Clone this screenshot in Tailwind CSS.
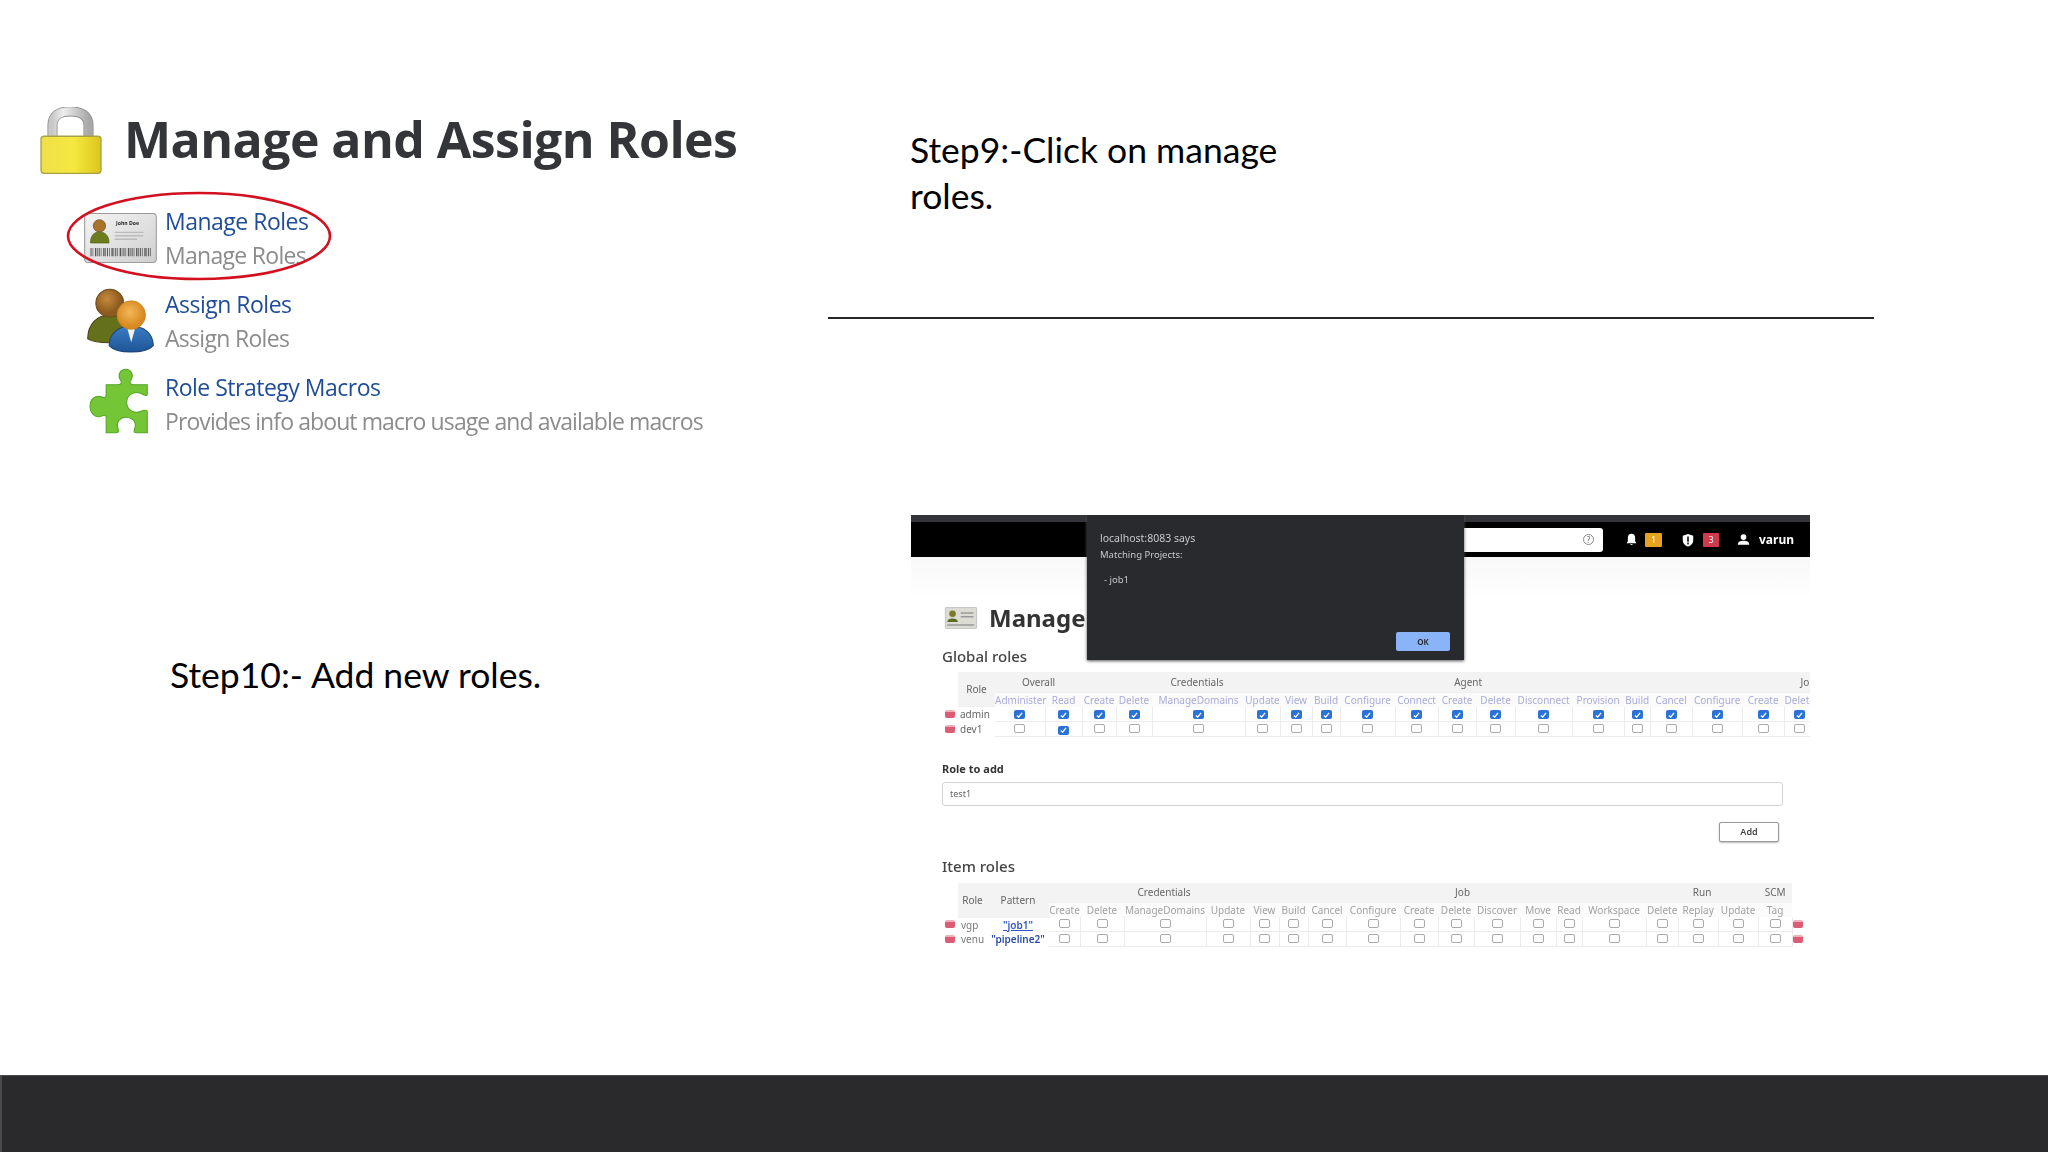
<!DOCTYPE html>
<html lang="en">
<head>
  <meta charset="UTF-8">
  <title>Manage and Assign Roles</title>
  <script src="https://cdn.jsdelivr.net/npm/@tailwindcss/browser@4"></script>
</head>
<body class="bg-white">
<div class="relative w-[2048px] h-[1152px] overflow-hidden flex flex-col bg-white font-['Open_Sans',sans-serif]">
  <div class="h-[1075px] flex">

    <!-- left column -->
    <div class="w-[828px] pt-[107px]">
      <div class="flex items-center pl-[39px] h-[68px]">
        <svg class="w-[64px] h-[69px]" viewBox="25 35 190 205">
          <defs>
            <linearGradient id="lk" x1="0" x2="1" y1="0" y2="0"><stop offset="0" stop-color="#efe04a"/><stop offset=".55" stop-color="#f5e840"/><stop offset="1" stop-color="#dcc51c"/></linearGradient>
            <linearGradient id="sh" x1="0" x2="1" y1="0" y2="0"><stop offset="0" stop-color="#c8c8c8"/><stop offset=".3" stop-color="#eeeeee"/><stop offset="1" stop-color="#a8a8a8"/></linearGradient>
          </defs>
          <path d="M65 125 V90 C65 60 85 48 118 48 C150 48 172 60 172 90 V125" fill="none" stroke="#8f8f8f" stroke-width="30"/>
          <path d="M65 125 V90 C65 60 85 48 118 48 C150 48 172 60 172 90 V125" fill="none" stroke="url(#sh)" stroke-width="25"/>
          <rect x="31" y="122" width="178" height="110" rx="9" fill="url(#lk)" stroke="#a99f45" stroke-width="4"/>
        </svg>
        <h1 class="ml-[21px] -mt-[5px] text-[50px] leading-[68px] font-bold tracking-[-0.55px] text-[#333538] whitespace-nowrap">Manage and Assign Roles</h1>
      </div>

      <div class="mt-[29px] pl-[84px] flex flex-col blur-[0.3px]">
        <div class="relative h-[83px] flex">
          <div class="w-[81px] pt-[8px]">
            <svg class="w-[73px] h-[52px]" viewBox="45 40 213 147">
              <defs><linearGradient id="cd" x1="0" x2="1" y1="0" y2="1"><stop offset="0" stop-color="#f4f4f4"/><stop offset="1" stop-color="#cfcfcf"/></linearGradient></defs>
              <rect x="47" y="42" width="209" height="143" rx="10" fill="url(#cd)" stroke="#9a9a9a" stroke-width="3"/>
              <circle cx="90" cy="78" r="18" fill="#a8742c" stroke="#6b4a1c" stroke-width="2"/>
              <path d="M64 128 C64 104 76 96 90 96 C104 96 118 104 118 128 Z" fill="#6d7d1e" stroke="#4f5a16" stroke-width="2"/>
              <text x="172" y="77" text-anchor="middle" font-size="15" font-weight="700" fill="#222">John Doe</text>
              <path d="M135 97 H218 M135 107 H218 M135 117 H200" stroke="#bbb" stroke-width="4"/>
              <path d="M64 155 H242" stroke="#555" stroke-width="24" stroke-dasharray="3 3 2 5 4 2 2 3"/>
            </svg>
          </div>
          <div class="text-[23px] leading-[34px] whitespace-nowrap">
            <div class="text-[#1f4d99] tracking-[-0.5px]">Manage Roles</div>
            <div class="text-[#8c8c8c] tracking-[-0.7px]">Manage Roles</div>
          </div>
        </div>
        <div class="h-[83px] flex">
          <div class="w-[81px] pl-[2px]">
            <svg class="w-[68px] h-[68px]" viewBox="50 260 200 195">
              <defs>
                <radialGradient id="hb" cx=".4" cy=".35"><stop offset="0" stop-color="#c88a3c"/><stop offset="1" stop-color="#8a5a1e"/></radialGradient>
                <radialGradient id="ho" cx=".45" cy=".4"><stop offset="0" stop-color="#f2b75c"/><stop offset="1" stop-color="#d98a20"/></radialGradient>
                <linearGradient id="bb" x1="0" x2="0" y1="0" y2="1"><stop offset="0" stop-color="#3b7cc4"/><stop offset="1" stop-color="#1e5596"/></linearGradient>
              </defs>
              <path d="M55 410 C55 365 85 340 120 340 C155 340 185 365 185 410 C160 425 80 425 55 410 Z" fill="#64701a" stroke="#4a3d18" stroke-width="3"/>
              <circle cx="120" cy="305" r="41" fill="url(#hb)" stroke="#6a4a1c" stroke-width="3"/>
              <path d="M118 430 C118 395 145 372 183 372 C221 372 248 395 248 430 C225 455 140 455 118 430 Z" fill="url(#bb)" stroke="#1c4478" stroke-width="3"/>
              <path d="M170 374 L183 420 L196 374 Z" fill="#f4f4f4"/>
              <circle cx="183" cy="340" r="42" fill="url(#ho)" stroke="#c07c1e" stroke-width="2"/>
            </svg>
          </div>
          <div class="text-[23px] leading-[34px] whitespace-nowrap">
            <div class="text-[#1f4d99] tracking-[-0.5px]">Assign Roles</div>
            <div class="text-[#8c8c8c] tracking-[-0.7px]">Assign Roles</div>
          </div>
        </div>
        <div class="h-[83px] flex">
          <div class="w-[81px] pl-[5px] -mt-[3px]">
            <svg class="w-[60px] h-[68px]" viewBox="55 510 175 195">
              <path d="M105 560 H140 C150 560 152 552 146 545 C138 532 146 515 162 515 C178 515 186 532 178 545 C172 552 174 560 184 560 H225 V588 C225 595 215 590 205 585 C185 578 165 590 165 612 C165 635 188 645 205 638 C215 634 225 632 225 640 V700 H192 C182 700 188 690 190 682 C192 665 178 655 162 655 C146 655 135 668 138 682 C140 690 145 700 135 700 H105 V655 C105 645 97 650 90 652 C75 658 58 645 58 622 C58 600 75 590 90 595 C98 598 105 600 105 590 Z" fill="#74c636" stroke="#55a522" stroke-width="3"/>
            </svg>
          </div>
          <div class="text-[23px] leading-[34px] whitespace-nowrap">
            <div class="text-[#1f4d99] tracking-[-0.5px]">Role Strategy Macros</div>
            <div class="text-[#8c8c8c] tracking-[-0.9px]">Provides info about macro usage and available macros</div>
          </div>
        </div>
      </div>

      <p class="mt-[199px] pl-[170px] font-['Lato',sans-serif] text-[35.5px] leading-[46px] text-black whitespace-nowrap">Step10:- Add new roles.</p>
    </div>

    <!-- right column -->
    <div class="flex-1 pt-[127px]">
      <p class="pl-[82px] w-[460px] font-['Lato',sans-serif] text-[35.5px] leading-[46px] text-black">Step9:-Click on manage roles.</p>
      <div class="mt-[98px] w-[1046px] h-[2px] bg-[#262626]"></div>

      <!-- embedded screenshot -->
      <div class="relative mt-[196px] ml-[83px] w-[899px] h-[470px] overflow-hidden bg-white font-['Noto_Sans',sans-serif] blur-[0.6px]">
        <div class="h-[7px] bg-[#33343a]"></div>
        <div class="h-[35px] bg-black flex items-center text-white">
          <div class="ml-[490px] w-[202px] h-[24px] bg-white rounded-[3px] flex items-center justify-end pr-[9px]">
            <div class="w-[11px] h-[11px] rounded-full border border-[#888] text-[8px] leading-[9px] text-center text-[#666]">?</div>
          </div>
          <svg class="ml-[22px] w-[13px] h-[13px]" viewBox="0 0 16 16"><path d="M8 1 C5 1 3.5 3 3.5 6 V10 L2 12.5 H14 L12.5 10 V6 C12.5 3 11 1 8 1 Z M6.5 13.5 H9.5 C9.5 15 6.5 15 6.5 13.5 Z" fill="#fff"/></svg>
          <div class="ml-[7px] w-[17px] h-[14px] bg-[#e6a320] rounded-[1px] text-[9px] leading-[14px] text-center">1</div>
          <svg class="ml-[19px] w-[14px] h-[14px]" viewBox="0 0 16 16"><path d="M8 1 L14 3 V8 C14 12 11 14.5 8 15.5 C5 14.5 2 12 2 8 V3 Z" fill="#fff"/><rect x="7" y="4" width="2" height="6" fill="#222"/><rect x="7" y="11" width="2" height="2" fill="#222"/></svg>
          <div class="ml-[8px] w-[16px] h-[14px] bg-[#d13a4b] rounded-[1px] text-[9px] leading-[14px] text-center">3</div>
          <svg class="ml-[18px] w-[13px] h-[13px]" viewBox="0 0 16 16"><circle cx="8" cy="5" r="3.5" fill="#fff"/><path d="M1 14.5 C1 10.5 4 9.5 8 9.5 C12 9.5 15 10.5 15 14.5 Z" fill="#fff"/></svg>
          <span class="ml-[9px] text-[12px] font-bold">varun</span>
        </div>
        <div class="h-[42px] bg-linear-to-b from-[#f8f8f8] to-white"></div>

        <div class="pl-[31px] flex items-center h-[38px]">
          <svg class="w-[38px] h-[22px]" viewBox="45 40 213 147"><rect x="47" y="42" width="209" height="143" rx="8" fill="#dcdcd4" stroke="#aaa" stroke-width="4"/><circle cx="95" cy="85" r="22" fill="#7a7a2a"/><path d="M60 140 C60 110 130 110 130 140 Z" fill="#5d6d22"/><path d="M150 80 H235 M150 105 H235 M60 160 H240" stroke="#999" stroke-width="10"/></svg>
          <span class="ml-[9px] text-[24px] font-bold text-[#333]">Manage</span>
        </div>
        <div class="pl-[31px] mt-[9px] h-[20px] text-[15px] leading-[20px] font-medium text-[#444]">Global roles</div>

        <div id="globalTable" class="pl-[34px] mt-[6px]"></div>

        <div class="pl-[31px] mt-[24px] h-[16px] text-[11px] leading-[16px] font-bold text-[#333]">Role to add</div>
        <div class="ml-[31px] mt-[5px] w-[841px] h-[24px] border border-[#d4d4d4] rounded-[3px] bg-white pl-[7px] text-[9px] leading-[22px] text-[#666]">test1</div>
        <div class="mt-[16px] ml-[808px] w-[60px] h-[20px] border border-[#999] rounded-[2px] bg-white text-center text-[9px] leading-[18px] font-semibold text-[#444] shadow-[0_1px_2px_#bbb]">Add</div>
        <div class="pl-[31px] mt-[14px] h-[20px] text-[15px] leading-[20px] font-medium text-[#444]">Item roles</div>

        <div id="itemTable" class="pl-[34px] mt-[7px]"></div>

        <!-- browser alert over the page -->
        <div class="absolute left-[176px] top-0 w-[377px] h-[145px] bg-[#292a2d] text-[#c8c8c8] text-[10.5px] shadow-[0_1px_3px_#555]">
          <div class="pl-[13px] pt-[14px] leading-[18px]">localhost:8083 says</div>
          <div class="pl-[13px] pt-[1px] text-[9.5px] leading-[14px]">Matching Projects:</div>
          <div class="pl-[17px] pt-[11px] text-[9.5px] leading-[14px]">- job1</div>
          <div class="absolute right-[14px] bottom-[9px] w-[54px] h-[19px] bg-[#8ab4f8] rounded-[2px] text-center text-[8px] leading-[19px] text-[#202124] font-semibold">OK</div>
        </div>
      </div>
    </div>
  </div>

  <div class="h-[77px] bg-[#2a2a2c] border-l-2 border-t border-[#4a4a4a]"></div>

  <!-- hand drawn red ring around the first entry -->
  <svg class="absolute left-[60px] top-[185px] w-[280px] h-[100px]" viewBox="0 0 280 100">
    <ellipse cx="139" cy="51" rx="131" ry="43" fill="none" stroke="#d3101f" stroke-width="2.6"/>
  </svg>
</div>

<script>
  const headCell = "border-b border-[#f0f0f0] bg-[#f3f3f3] text-[#666] text-center font-normal overflow-visible whitespace-nowrap p-0";
  const subCell = "text-[#a9acd8] text-center font-normal whitespace-nowrap p-0 bg-[#fbfbfb]";
  const bodyCell = "border-b border-r border-[#ececec] text-center p-0";
  const on = '<span class="inline-flex items-center justify-center w-[11px] h-[9px] rounded-[2px] bg-[#2a72d6]"><svg class="w-[7px] h-[6px]" viewBox="0 0 8 7"><path d="M1 4 L3 6 L7 1" fill="none" stroke="#fff" stroke-width="1.5"/></svg></span>';
  const off = '<span class="inline-block w-[11px] h-[9px] rounded-[2px] border border-[#aaa] bg-white"></span>';
  const del = '<span class="inline-block w-[10px] h-[8px] rounded-[2px] bg-[#dd5c74] border-t-2 border-[#f0b0b8]"></span>';

  function colgroup(widths) {
    return "<colgroup>" + widths.map(w => `<col style="width:${w}px">`).join("") + "</colgroup>";
  }

  // global roles
  const gw = [13, 37, 50, 37, 34, 36, 93, 35, 32, 28, 55, 43, 38, 39, 57, 52, 26, 42, 50, 42, 31];
  const gsub = ["Administer", "Read", "Create", "Delete", "ManageDomains", "Update", "View", "Build", "Configure", "Connect", "Create", "Delete", "Disconnect", "Provision", "Build", "Cancel", "Configure", "Create", "Delete"];
  const gtotal = gw.reduce((a, b) => a + b, 0);
  let g = `<table class="table-fixed border-collapse text-[10px] leading-[14px]" style="width:${gtotal}px">` + colgroup(gw);
  g += `<tr class="h-[20px]"><th rowspan="2"></th><th rowspan="2" class="${headCell}">Role</th><th colspan="2" class="${headCell}">Overall</th><th colspan="5" class="${headCell}">Credentials</th><th colspan="7" class="${headCell}">Agent</th><th colspan="5" class="${headCell} !text-right !pr-[6px]">Jo</th></tr>`;
  g += `<tr class="h-[14px]">` + gsub.map(s => `<th class="${subCell}">${s}</th>`).join("") + "</tr>";
  g += `<tr class="h-[15px]"><td>${del}</td><td class="text-[#666] pl-[2px] text-left">admin</td>` + gsub.map(() => `<td class="${bodyCell}">${on}</td>`).join("") + "</tr>";
  g += `<tr class="h-[15px]"><td>${del}</td><td class="text-[#666] pl-[2px] text-left">dev1</td>` + gsub.map((s, i) => `<td class="${bodyCell}">${i == 1 ? on : off}</td>`).join("") + "</tr></table>";
  document.getElementById("globalTable").innerHTML = g;

  // item roles
  const iw = [13, 29, 62, 31, 44, 82, 44, 29, 29, 38, 54, 38, 36, 46, 36, 26, 64, 32, 40, 40, 34, 13];
  const isub = ["Create", "Delete", "ManageDomains", "Update", "View", "Build", "Cancel", "Configure", "Create", "Delete", "Discover", "Move", "Read", "Workspace", "Delete", "Replay", "Update", "Tag"];
  const itotal = iw.reduce((a, b) => a + b, 0);
  let t = `<table class="table-fixed border-collapse text-[10px] leading-[14px]" style="width:${itotal}px">` + colgroup(iw);
  t += `<tr class="h-[19px]"><th rowspan="2"></th><th rowspan="2" class="${headCell}">Role</th><th rowspan="2" class="${headCell}">Pattern</th><th colspan="5" class="${headCell}">Credentials</th><th colspan="9" class="${headCell}">Job</th><th colspan="3" class="${headCell}">Run</th><th class="${headCell}">SCM</th><th rowspan="2"></th></tr>`;
  t += `<tr class="h-[15px]">` + isub.map(s => `<th class="text-[#a2a2a2] text-center font-normal whitespace-nowrap p-0 bg-[#fbfbfb]">${s}</th>`).join("") + "</tr>";
  t += `<tr class="h-[14px]"><td>${del}</td><td class="text-[#777] pl-[3px] text-left">vgp</td><td class="text-[#2f55c8] underline text-center font-semibold">"job1"</td>` + isub.map(() => `<td class="${bodyCell}">${off}</td>`).join("") + `<td>${del}</td></tr>`;
  t += `<tr class="h-[15px]"><td>${del}</td><td class="text-[#777] pl-[3px] text-left">venu</td><td class="text-[#2a4aa8] text-center font-semibold whitespace-nowrap">"pipeline2"</td>` + isub.map(() => `<td class="${bodyCell}">${off}</td>`).join("") + `<td>${del}</td></tr></table>`;
  document.getElementById("itemTable").innerHTML = t;
</script>
</body>
</html>
